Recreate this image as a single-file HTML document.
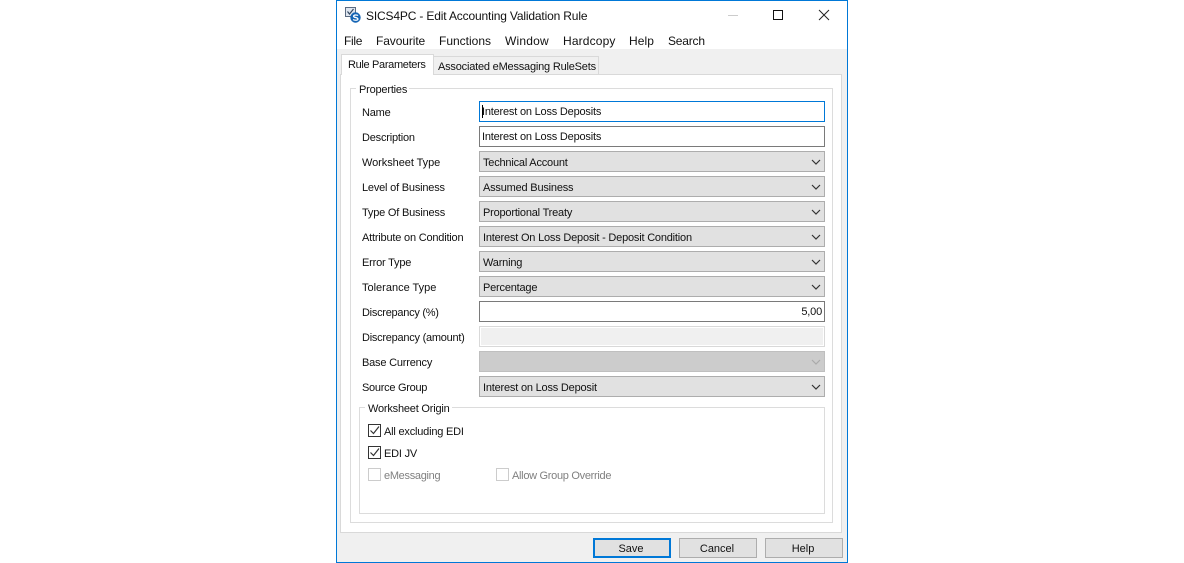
<!DOCTYPE html>
<html><head><meta charset="utf-8">
<style>
html,body{margin:0;padding:0;background:#fff;}
body{width:1184px;height:563px;overflow:hidden;position:relative;font-family:"Liberation Sans",sans-serif;font-size:11px;color:#111;}
div,span.t{position:absolute;box-sizing:border-box;white-space:nowrap;}
.t{line-height:14px;height:14px;letter-spacing:-.2px;}
.m{font-size:12px;letter-spacing:-.1px;top:34px;}
.l{left:362px;}
.c{left:479px;width:346px;height:21px;background:#e1e1e1;border:1px solid #adadad;padding-left:3px;line-height:22px;letter-spacing:-.2px;}
.c svg{position:absolute;right:1px;top:3px;}
.i{left:479px;width:346px;height:21px;background:#fff;border:1px solid #7a7a7a;padding-left:2px;line-height:20px;letter-spacing:-.2px;}
.b{top:538px;width:78px;height:20px;background:#e1e1e1;border:1px solid #adadad;text-align:center;line-height:20px;padding-right:2px;}
.cb{width:13px;height:13px;border:1px solid #333;background:#fff;}
.cb.d{border-color:#ccc;}
</style></head><body>
<div style="left:336px;top:0;width:512px;height:563px;border:1px solid #0078d7;background:#fff;"></div>
<div style="left:337px;top:49px;width:510px;height:513px;background:#f0f0f0;"></div>

<svg style="position:absolute;left:344px;top:6px" width="18" height="18" viewBox="0 0 18 18">
<rect x="1.5" y="1.5" width="10" height="9" fill="#dfe6f0" stroke="#5a6a80"/>
<path d="M3.5 5.5l2 2.5 4-5" fill="none" stroke="#33475f" stroke-width="1.2"/>
<circle cx="11.5" cy="11.5" r="5.2" fill="#1464b4"/>
<path d="M14 9.6c-.8-.8-4.2-1-4.4.6-.2 1.7 4.4 1 4.3 2.9-.1 1.6-3.7 1.3-4.8.4" fill="none" stroke="#fff" stroke-width="1.3"/>
</svg>
<span class="t" style="left:366px;top:9px;font-size:12px;letter-spacing:-.16px;">SICS4PC - Edit Accounting Validation Rule</span>
<div style="left:728px;top:15px;width:10px;height:1px;background:#ccc;"></div>
<div style="left:773px;top:10px;width:10px;height:10px;border:1px solid #111;"></div>
<svg style="position:absolute;left:818px;top:9px" width="12" height="12"><path d="M1 1l10 10M11 1L1 11" stroke="#222" stroke-width="1" fill="none"/></svg>

<span class="t m" style="left:344px;letter-spacing:-.3px;">File</span>
<span class="t m" style="left:376px;">Favourite</span>
<span class="t m" style="left:439px;letter-spacing:0;">Functions</span>
<span class="t m" style="left:505px;letter-spacing:.2px;">Window</span>
<span class="t m" style="left:563px;letter-spacing:.15px;">Hardcopy</span>
<span class="t m" style="left:629px;letter-spacing:.1px;">Help</span>
<span class="t m" style="left:668px;letter-spacing:-.2px;">Search</span>

<!-- tabs -->
<div style="left:340px;top:74px;width:502px;height:459px;background:#fff;border:1px solid #d9d9d9;"></div>
<div style="left:433px;top:56px;width:166px;height:19px;background:#f0f0f0;border:1px solid #d9d9d9;"></div>
<div style="left:341px;top:54px;width:93px;height:21px;background:#fff;border:1px solid #d9d9d9;border-bottom:0;"></div>
<span class="t" style="left:348px;top:58px;letter-spacing:-.33px;">Rule Parameters</span>
<span class="t" style="left:438px;top:60px;">Associated eMessaging RuleSets</span>

<!-- properties -->
<div style="left:350px;top:88px;width:483px;height:435px;border:1px solid #dcdcdc;"></div>
<div style="left:356px;top:82px;width:53px;height:14px;background:#fff;"></div>
<span class="t" style="left:359px;top:83px;">Properties</span>

<span class="t l" style="top:106px;">Name</span>
<span class="t l" style="top:131px;">Description</span>
<span class="t l" style="top:156px;letter-spacing:-.06px;">Worksheet Type</span>
<span class="t l" style="top:181px;">Level of Business</span>
<span class="t l" style="top:206px;">Type Of Business</span>
<span class="t l" style="top:231px;">Attribute on Condition</span>
<span class="t l" style="top:256px;">Error Type</span>
<span class="t l" style="top:281px;letter-spacing:.0px;">Tolerance Type</span>
<span class="t l" style="top:306px;letter-spacing:-.27px;">Discrepancy (%)</span>
<span class="t l" style="top:331px;letter-spacing:-.25px;">Discrepancy (amount)</span>
<span class="t l" style="top:356px;">Base Currency</span>
<span class="t l" style="top:381px;letter-spacing:-.28px;">Source Group</span>

<div class="i" style="top:101px;border-color:#0078d7;">Interest on Loss Deposits<div style="left:2px;top:3px;width:1px;height:13px;background:#000;"></div></div>
<div class="i" style="top:126px;">Interest on Loss Deposits</div>
<div class="c" style="top:151px;">Technical Account<svg width="14" height="14"><path d="M3 5l4 4 4-4" fill="none" stroke="#333" stroke-width="1.2"/></svg></div>
<div class="c" style="top:176px;">Assumed Business<svg width="14" height="14"><path d="M3 5l4 4 4-4" fill="none" stroke="#333" stroke-width="1.2"/></svg></div>
<div class="c" style="top:201px;">Proportional Treaty<svg width="14" height="14"><path d="M3 5l4 4 4-4" fill="none" stroke="#333" stroke-width="1.2"/></svg></div>
<div class="c" style="top:226px;">Interest On Loss Deposit - Deposit Condition<svg width="14" height="14"><path d="M3 5l4 4 4-4" fill="none" stroke="#333" stroke-width="1.2"/></svg></div>
<div class="c" style="top:251px;">Warning<svg width="14" height="14"><path d="M3 5l4 4 4-4" fill="none" stroke="#333" stroke-width="1.2"/></svg></div>
<div class="c" style="top:276px;">Percentage<svg width="14" height="14"><path d="M3 5l4 4 4-4" fill="none" stroke="#333" stroke-width="1.2"/></svg></div>
<div class="i" style="top:301px;text-align:right;padding-right:2px;">5,00</div>
<div class="i" style="top:326px;background:#f0f0f0;border-color:#d9d9d9;box-shadow:inset 0 0 0 1px #fff;"></div>
<div class="c" style="top:351px;background:#cccccc;border-color:#bfbfbf;"><svg width="14" height="14"><path d="M3 5l4 4 4-4" fill="none" stroke="#aaa" stroke-width="1.2"/></svg></div>
<div class="c" style="top:376px;">Interest on Loss Deposit<svg width="14" height="14"><path d="M3 5l4 4 4-4" fill="none" stroke="#333" stroke-width="1.2"/></svg></div>

<!-- worksheet origin -->
<div style="left:359px;top:407px;width:466px;height:107px;border:1px solid #dcdcdc;"></div>
<div style="left:365px;top:401px;width:87px;height:14px;background:#fff;"></div>
<span class="t" style="left:368px;top:402px;">Worksheet Origin</span>

<div class="cb" style="left:368px;top:424px;"><svg style="position:absolute;left:0;top:0" width="11" height="11"><path d="M1.5 5.5l3 3 5.5-7" fill="none" stroke="#333" stroke-width="1.2"/></svg></div>
<span class="t" style="left:384px;top:425px;">All excluding EDI</span>
<div class="cb" style="left:368px;top:446px;"><svg style="position:absolute;left:0;top:0" width="11" height="11"><path d="M1.5 5.5l3 3 5.5-7" fill="none" stroke="#333" stroke-width="1.2"/></svg></div>
<span class="t" style="left:384px;top:447px;">EDI JV</span>
<div class="cb d" style="left:368px;top:468px;"></div>
<span class="t" style="left:384px;top:469px;color:#808080;letter-spacing:-.3px;">eMessaging</span>
<div class="cb d" style="left:496px;top:468px;"></div>
<span class="t" style="left:512px;top:469px;color:#808080;letter-spacing:-.3px;">Allow Group Override</span>

<!-- buttons -->
<div class="b" style="left:593px;border:2px solid #0078d7;line-height:18px;">Save</div>
<div class="b" style="left:679px;">Cancel</div>
<div class="b" style="left:765px;">Help</div>
</body></html>
